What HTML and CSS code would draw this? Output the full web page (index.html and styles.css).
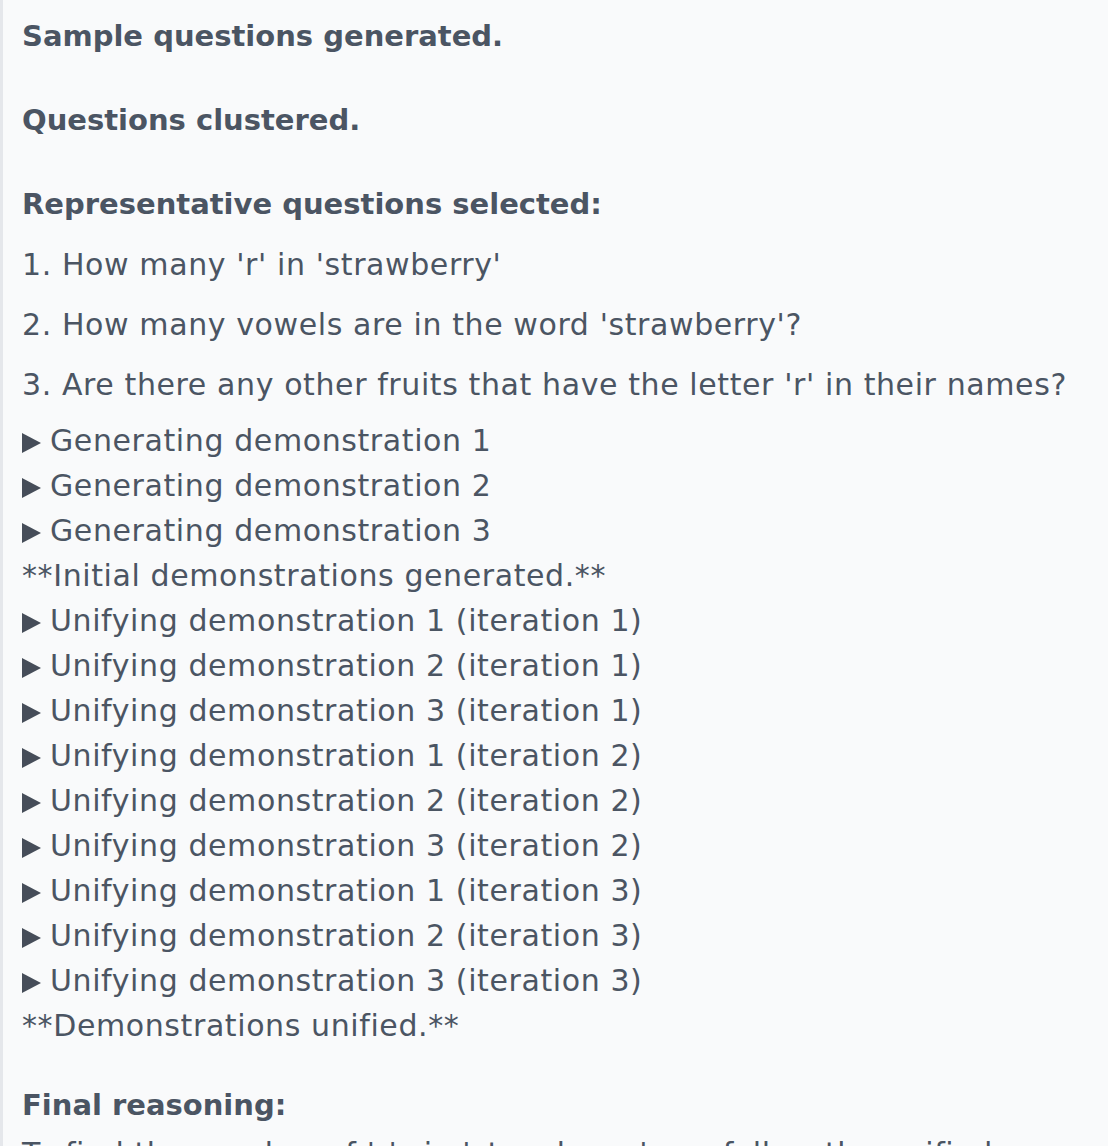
FILE: index.html
```html
<!DOCTYPE html>
<html lang="en">
<head>
<meta charset="utf-8">
<title>Reasoning log</title>
<link rel="stylesheet" href="styles.css">
</head>
<body>
<div class="log">
  <p class="step">Sample questions generated.</p>
  <p class="step">Questions clustered.</p>
  <p class="step step-tight">Representative questions selected:</p>
  <p class="question">1. How many 'r' in 'strawberry'</p>
  <p class="question">2. How many vowels are in the word 'strawberry'?</p>
  <p class="question question-last">3. Are there any other fruits that have the letter 'r' in their names?</p>
  <details class="item"><summary class="summary">Generating demonstration 1</summary></details>
  <details class="item"><summary class="summary">Generating demonstration 2</summary></details>
  <details class="item"><summary class="summary">Generating demonstration 3</summary></details>
  <p class="note">**Initial demonstrations generated.**</p>
  <details class="item"><summary class="summary">Unifying demonstration 1 (iteration 1)</summary></details>
  <details class="item"><summary class="summary">Unifying demonstration 2 (iteration 1)</summary></details>
  <details class="item"><summary class="summary">Unifying demonstration 3 (iteration 1)</summary></details>
  <details class="item"><summary class="summary">Unifying demonstration 1 (iteration 2)</summary></details>
  <details class="item"><summary class="summary">Unifying demonstration 2 (iteration 2)</summary></details>
  <details class="item"><summary class="summary">Unifying demonstration 3 (iteration 2)</summary></details>
  <details class="item"><summary class="summary">Unifying demonstration 1 (iteration 3)</summary></details>
  <details class="item"><summary class="summary">Unifying demonstration 2 (iteration 3)</summary></details>
  <details class="item"><summary class="summary">Unifying demonstration 3 (iteration 3)</summary></details>
  <p class="note note-last">**Demonstrations unified.**</p>
  <p class="step step-final">Final reasoning:</p>
  <p class="answer">To find the number of 'r's in 'strawberry', we follow the unified demonstration and count each letter carefully.</p>
</div>
</body>
</html>
```
FILE: styles.css
```css
html {
  background: #f9fafb;
}

body {
  margin: 0;
  background: #f9fafb;
  font-family: "DejaVu Sans", "Noto Sans", sans-serif;
  color: #4b5563;
}

.log {
  border-left: 3px solid #e5e7eb;
  padding: 14px 20px 0 19px;
  font-size: 30px;
  letter-spacing: 0.6px;
  line-height: 45px;
}

.log p {
  margin: 0;
}

.step {
  font-weight: 700;
  font-size: 29px;
  letter-spacing: 0;
  margin-bottom: 39px !important;
}

.step-tight {
  margin-bottom: 15px !important;
}

.step-final {
  margin-bottom: 3px !important;
}

.question {
  margin-bottom: 15px !important;
}

.question-last {
  margin-bottom: 11px !important;
}

.item {
  margin: 0;
}

.summary {
  display: flex;
  align-items: center;
  list-style: none;
  cursor: pointer;
}

.summary::-webkit-details-marker {
  display: none;
}

.summary::before {
  content: "";
  flex: none;
  width: 0;
  height: 0;
  border-left: 19px solid #464d59;
  border-top: 10px solid transparent;
  border-bottom: 10px solid transparent;
  margin: 4px 9px 0 0;
}

.note-last {
  margin-bottom: 35px !important;
}
```
